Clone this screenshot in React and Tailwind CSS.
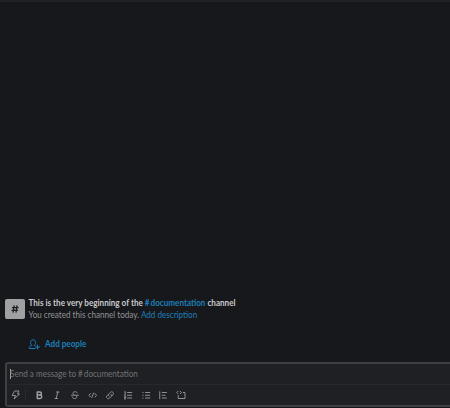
import React from "react";

function Icon({ children, className = "" }) {
  return (
    <svg
      viewBox="0 0 20 20"
      className={"size-2.5 shrink-0 " + className}
      fill="none"
      stroke="currentColor"
      strokeWidth="1.7"
      strokeLinecap="round"
      strokeLinejoin="round"
    >
      {children}
    </svg>
  );
}

function ChannelIntro() {
  return (
    <section className="flex h-[24px] items-start pl-[5px]">
      <div className="mt-[2px] flex size-5 shrink-0 items-center justify-center rounded-[2px] bg-[#a0a1a3] text-[#1d1f23]">
        <svg viewBox="0 0 10 10" className="size-2" fill="none" stroke="currentColor" strokeWidth="1.6">
          <path d="M4 0.5L2.6 9.5M7.6 0.5L6.2 9.5M1.2 3.2H9.4M0.6 6.7H8.8" />
        </svg>
      </div>
      <div className="ml-[3.5px] whitespace-nowrap">
        <h1 className="scale-y-[1.12] text-[8.12px] leading-[12px] font-bold text-[#c9cacb]">
          This is the very beginning of the{" "}
          <a className="text-[#1c7fb9]">
            #<span className="ml-px">documentation</span>
          </a>{" "}
          channel
        </h1>
        <p className="scale-y-[1.12] text-[8.12px] leading-[12px] text-[#929395]">
          You created this channel today. <a className="text-[#1c7fb9]">Add description</a>
        </p>
      </div>
    </section>
  );
}

function AddPeople() {
  return (
    <button className="mt-[17px] flex h-3 items-center pl-7 text-[8.15px] leading-3 font-bold text-[#1c7fb9]">
      <svg
        viewBox="0 0 24 22"
        className="mr-[5px] h-[11px] w-3 shrink-0"
        fill="none"
        stroke="currentColor"
        strokeWidth="2"
        strokeLinecap="round"
        strokeLinejoin="round"
      >
        <path d="M14 19H2.500c0-3 1-4.700 4.300-5.600l1.200-.5C5.500 10.500 5.200 8.500 5.200 6.800C5.200 3.700 7.300 1.500 10.200 1.500s5 2.200 5 5.300c0 1.700-.3 3.700-2.800 6.100l1.600.7M19 12v8M15 16h8" />
      </svg>
      <span className="scale-y-[1.12]">Add people</span>
    </button>
  );
}

function Composer() {
  return (
    <section className="mt-[12px] ml-[5px] h-[45px] rounded-l-[3px] border-y-2 border-l-2 border-[#3e3f43] bg-[#1e2024]">
      <div className="flex h-[20px] items-center pl-[3px]">
        <span className="h-[10px] w-px bg-[#a6a7a9]" />
        <span className="-ml-px scale-y-[1.12] text-[8.15px] leading-3 whitespace-nowrap text-[#727376]">
          Send a message to #<span className="ml-px">documentation</span>
        </span>
      </div>
      <div className="flex h-[21px] items-center border-t border-[#26282c] pl-[4px] text-[#a2a3a5]">
        <Icon>
          <path d="M8 2h8l-3 6h4L6 18l3-7H3z" />
        </Icon>
        <span className="ml-[4px] h-[12px] w-px bg-[#292b2f]" />
        <Icon className="ml-[8px]">
          <path strokeWidth="2.7" d="M6.500 4h5c4.500 0 4.500 6 0 6h-5zM6.500 10h5.500c4.800 0 4.800 7 0 7H6.500z" />
        </Icon>
        <Icon className="ml-[8px]">
          <path d="M9 4h5M6 17h5M11.700 4L8.300 17" />
        </Icon>
        <Icon className="ml-[8px]">
          <path d="M14.500 6c-1-2-2.500-2.500-4.500-2.500-4.500 0-6 4-2.500 6M3 10.500h14M12.500 12c3.500 3-1 5.500-3.500 5-2.500 0-4-1-4.500-3" />
        </Icon>
        <Icon className="ml-[8px]">
          <path d="M5 7L2 10.500 5 14M14 7l3 3.500-3 3.500M11.200 6l-3.400 9" />
        </Icon>
        <Icon className="ml-[7px]">
          <path d="M8 12.500c-2-2-1-4 0-5l3-3c3-3 8 1.500 5 5l-2 2M12 8.500c2 2 1 4 0 5l-3 3c-3 3-8-1.500-5-5l2-2" />
        </Icon>
        <Icon className="ml-[8px]">
          <path d="M9 5H17.500M9 10.500H17.500M9 16H17.500M3 4l1.500-1v4M3 9.500h2L3 12.500h2.500M3 15h2.500L4 16.500 5.500 18H3" />
        </Icon>
        <Icon className="ml-[8px]">
          <path d="M9 5h8.500M9 10.500h8.500M9 16h8.500M3.500 5h.8M3.500 10.500h.8M3.500 16h.8" />
        </Icon>
        <Icon className="ml-[7px]">
          <path d="M3.500 3.500v14M8.500 5H17M8.500 10.500H14M8.500 16H17" />
        </Icon>
        <Icon className="ml-[8px]">
          <path d="M4 2.500L1.500 5l2.500 2.500M8.500 2.500L11 5 8.500 7.500M14.500 5H18v12H4.500v-6" />
        </Icon>
      </div>
    </section>
  );
}

export default function App() {
  return (
    <main className="flex h-[408px] w-[450px] flex-col overflow-hidden border-t-2 border-[#202226] bg-[#17181b] font-['Lato',sans-serif]">
      <div className="h-[295px] shrink-0" />
      <ChannelIntro />
      <AddPeople />
      <Composer />
    </main>
  );
}
